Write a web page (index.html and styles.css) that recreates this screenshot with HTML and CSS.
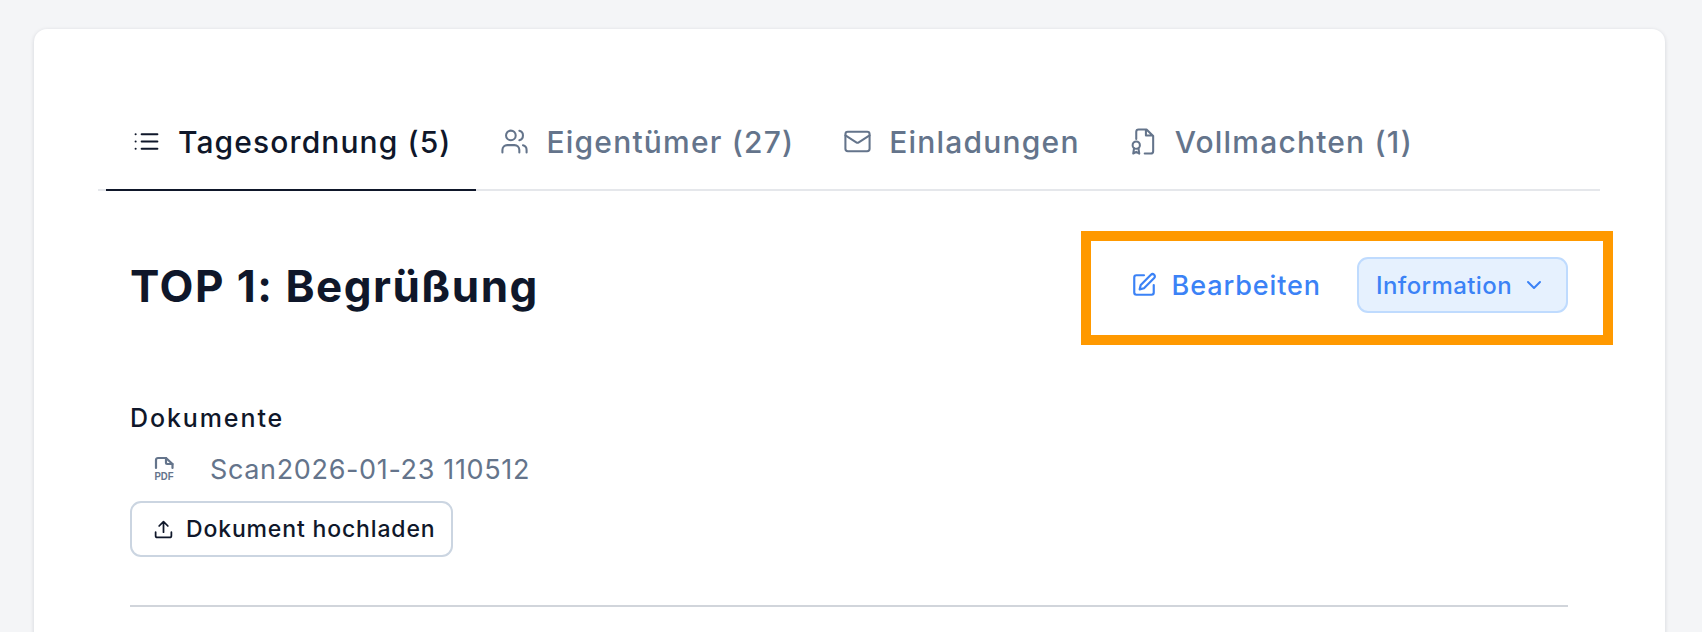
FILE: index.html
```html
<!DOCTYPE html>
<html lang="de">
<head>
<meta charset="utf-8">
<title>Tagesordnung</title>
<link rel="stylesheet" href="styles.css">
</head>
<body>
<main class="card">
  <nav class="tabs">
    <a class="tab active">
      <svg class="tab-icon" viewBox="0 0 24 24"><path d="M8 6h13M8 12h13M8 18h13M3 6h.01M3 12h.01M3 18h.01"/></svg>
      <span>Tagesordnung (5)</span>
    </a>
    <a class="tab">
      <svg class="tab-icon" viewBox="0 0 24 24"><path d="M16 21v-2a4 4 0 0 0-4-4H6a4 4 0 0 0-4 4v2"/><circle cx="9" cy="7" r="4"/><path d="M22 21v-2a4 4 0 0 0-3-3.87M16 3.13a4 4 0 0 1 0 7.75"/></svg>
      <span>Eigentümer (27)</span>
    </a>
    <a class="tab">
      <svg class="tab-icon" viewBox="0 0 24 24"><rect x="2" y="4" width="20" height="16" rx="2"/><path d="m22 7-8.97 5.7a1.94 1.94 0 0 1-2.06 0L2 7"/></svg>
      <span>Einladungen</span>
    </a>
    <a class="tab">
      <svg class="tab-icon" viewBox="0 0 24 24"><path d="M14 2v5h5M6 10V4a2 2 0 0 1 2-2h6.500L20 7.500V20a2 2 0 0 1-2 2h-5"/><circle cx="6" cy="15" r="3"/><path d="M4.200 17.500 3.500 22 6 20.600 8.500 22 7.800 17.500"/></svg>
      <span>Vollmachten (1)</span>
    </a>
  </nav>

  <header class="top-head">
    <h1 class="top-title">TOP 1: Begrüßung</h1>
    <div class="actions">
      <button class="edit-btn">
        <svg class="edit-icon" viewBox="0 0 24 24"><path d="M12 3H5a2 2 0 0 0-2 2v14a2 2 0 0 0 2 2h14a2 2 0 0 0 2-2v-7"/><path d="M18.400 2.600a2.120 2.120 0 0 1 3 3L12 15l-4 1 1-4z"/></svg>
        <span>Bearbeiten</span>
      </button>
      <button class="type-btn">
        <span>Information</span>
        <svg class="chev" viewBox="0 0 24 24"><path d="m6 9 6 6 6-6"/></svg>
      </button>
    </div>
  </header>

  <section class="docs">
    <h2 class="docs-label">Dokumente</h2>
    <div class="doc-row">
      <svg class="pdf-icon" viewBox="0 0 20 25"><path d="M12 1v5a1 1 0 0 0 1 1h5.500"/><path d="M2 11V3a2 2 0 0 1 2-2h8l6.500 6v4"/><text x="10" y="23" text-anchor="middle" textLength="19" lengthAdjust="spacingAndGlyphs" class="pdf-text">PDF</text></svg>
      <span class="doc-name">Scan2026-01-23 110512</span>
    </div>
    <button class="upload-btn">
      <svg class="upload-icon" viewBox="0 0 24 24"><path d="M21 15v4a2 2 0 0 1-2 2H5a2 2 0 0 1-2-2v-4M17 8l-5-5-5 5M12 3v12"/></svg>
      <span>Dokument hochladen</span>
    </button>
  </section>

  <hr class="divider">
</main>
</body>
</html>
```
FILE: styles.css
```css
* { box-sizing: border-box; }
html, body { height: 100%; }
body {
  margin: 0;
  background: #f4f5f7;
  font-family: "Inter", "Liberation Sans", sans-serif;
  overflow: hidden;
  padding: 29px 37px 0 34px;
}
.card {
  background: #fff;
  border-radius: 13px;
  box-shadow: 0 1px 4px rgba(15, 23, 42, .14);
  padding: 87px 97px 200px 96px;
  min-height: 800px;
}
.tabs {
  display: flex;
  margin-inline: -32px;
  padding-left: 8px;
  border-bottom: 2px solid #e5e7eb;
}
.tab {
  display: flex;
  align-items: center;
  gap: 17px;
  height: 75px;
  padding: 0 25px 22px 24px;
  margin-bottom: -2px;
  border-bottom: 2px solid transparent;
  font-size: 30px;
  font-weight: 450;
  letter-spacing: 1.2px;
  color: #64748b;
}
.tab.active {
  color: #0f172a;
  font-weight: 500;
  letter-spacing: 1.1px;
  border-bottom-color: #0f172a;
  padding-left: 26px;
  padding-right: 25px;
}
.tab-icon {
  width: 29px;
  height: 29px;
  flex: none;
  fill: none;
  stroke: currentColor;
  stroke-width: 1.7;
  stroke-linecap: round;
  stroke-linejoin: round;
}
.top-head {
  display: flex;
  align-items: center;
  justify-content: space-between;
  margin-top: 40px;
}
.top-title {
  margin: 0;
  padding-bottom: 4px;
  font-size: 44px;
  font-weight: 700;
  letter-spacing: 1.500px;
  color: #0f172a;
}
.actions {
  display: flex;
  align-items: center;
  justify-content: flex-end;
  gap: 36px;
  width: 532px;
  height: 114px;
  border: 10.500px solid #ff9900;
  padding-right: 35px;
  padding-bottom: 6px;
  margin-right: -45px;
}
button { font-family: inherit; cursor: pointer; }
.edit-btn {
  display: flex;
  align-items: center;
  gap: 15px;
  padding: 0;
  border: 0;
  background: none;
  color: #3b82f6;
  font-size: 27px;
  font-weight: 450;
  letter-spacing: .9px;
}
.edit-icon {
  width: 26px;
  height: 26px;
  fill: none;
  stroke: currentColor;
  stroke-width: 2;
  stroke-linecap: round;
  stroke-linejoin: round;
}
.type-btn {
  display: flex;
  align-items: center;
  justify-content: space-between;
  width: 211px;
  height: 56px;
  padding: 0 20px 0 17px;
  border: 2px solid #bfdbfe;
  border-radius: 11px;
  background: #e6f1fe;
  color: #3b82f6;
  font-size: 24px;
  font-weight: 450;
  letter-spacing: .4px;
}
.chev {
  width: 24px;
  height: 24px;
  fill: none;
  stroke: currentColor;
  stroke-width: 2;
  stroke-linecap: round;
  stroke-linejoin: round;
}
.docs { margin-top: 56px; }
.docs-label {
  margin: 0;
  font-size: 25px;
  line-height: 34px;
  font-weight: 500;
  letter-spacing: 1.9px;
  color: #0f172a;
}
.doc-row {
  display: flex;
  align-items: center;
  gap: 36px;
  height: 50px;
  margin-top: 9px;
  padding-left: 24px;
}
.pdf-icon {
  width: 20px;
  height: 25px;
  flex: none;
  overflow: visible;
  fill: none;
  stroke: #64748b;
  stroke-width: 2.200;
  stroke-linecap: round;
  stroke-linejoin: round;
}
.pdf-text {
  fill: #64748b;
  stroke: none;
  font-size: 11px;
  font-weight: 700;
  font-family: "Liberation Sans", sans-serif;
}
.doc-name {
  font-size: 27px;
  letter-spacing: .65px;
  color: #64748b;
}
.upload-btn {
  display: flex;
  align-items: center;
  gap: 12px;
  height: 56px;
  width: 323px;
  margin-top: 7px;
  padding: 0 21px;
  border: 2px solid #cbd5e1;
  border-radius: 11px;
  background: #fff;
  color: #0f172a;
  font-size: 23px;
  font-weight: 450;
  letter-spacing: .85px;
  white-space: nowrap;
}
.upload-icon {
  width: 21px;
  height: 21px;
  flex: none;
  fill: none;
  stroke: currentColor;
  stroke-width: 2;
  stroke-linecap: round;
  stroke-linejoin: round;
}
.divider {
  margin: 48px 0 0;
  border: 0;
  border-top: 2px solid #d1d5db;
}
```
